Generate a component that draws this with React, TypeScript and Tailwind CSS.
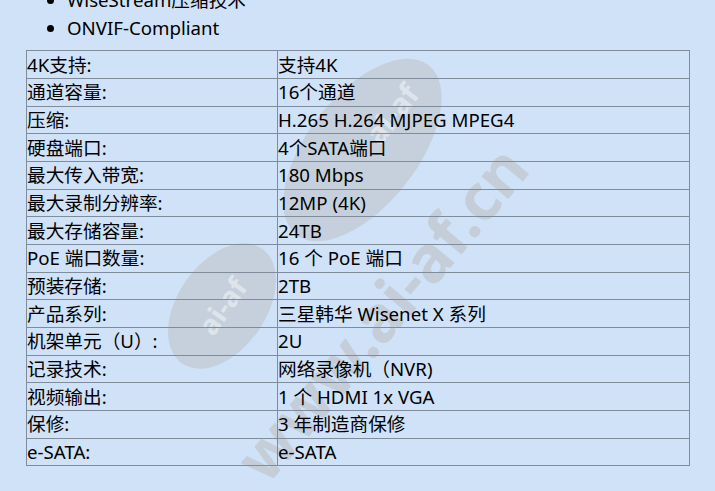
import React from "react";

const rows: [string, string][] = [
  ["4K支持:", "支持4K"],
  ["通道容量:", "16个通道"],
  ["压缩:", "H.265 H.264 MJPEG MPEG4"],
  ["硬盘端口:", "4个SATA端口"],
  ["最大传入带宽:", "180 Mbps"],
  ["最大录制分辨率:", "12MP (4K)"],
  ["最大存储容量:", "24TB"],
  ["PoE 端口数量:", "16 个 PoE 端口"],
  ["预装存储:", "2TB"],
  ["产品系列:", "三星韩华 Wisenet X 系列"],
  ["机架单元（U）:", "2U"],
  ["记录技术:", "网络录像机（NVR)"],
  ["视频输出:", "1 个 HDMI 1x VGA"],
  ["保修:", "3 年制造商保修"],
  ["e-SATA:", "e-SATA"],
];

export default function App() {
  return (
    <div
      className="relative h-[491px] w-[715px] overflow-hidden bg-[#cfe2f8] text-black"
      style={{ fontFamily: '"Noto Sans", "Noto Sans CJK SC", sans-serif' }}
    >
      {/* watermark (behind content) */}
      <div className="pointer-events-none absolute inset-0 z-0">
        <div className="absolute left-[152px] top-[262px] flex h-[88px] w-[140px] -rotate-[55deg] items-center justify-center rounded-[50%] bg-[#c0c4ca]/60">
          <span className="text-[28px] font-bold text-white/45" style={{ fontFamily: '"Noto Sans", sans-serif' }}>ai-af</span>
        </div>
        <div className="absolute left-[255px] top-[95px] flex h-[110px] w-[215px] -rotate-[52deg] items-center justify-end rounded-[50%] bg-[#c0c4ca]/60 pr-[28px]">
          <span className="text-[30px] font-bold text-white/45" style={{ fontFamily: '"Noto Sans", sans-serif' }}>ai-af</span>
        </div>
        <div
          className="absolute left-[175px] top-[265px] -rotate-[50deg] whitespace-nowrap text-[64px] font-bold text-[#c0c4ca]/70"
          style={{ fontFamily: '"Noto Sans", sans-serif' }}
        >
          www.ai-af.cn
        </div>
      </div>

      <div className="relative z-10">
        <ul className="mt-[-14px] list-disc pl-[67px] text-[18.67px] leading-[27.67px]">
          <li>WiseStream压缩技术</li>
          <li>ONVIF-Compliant</li>
        </ul>
        <table className="ml-[26px] mt-[9px] w-[664px] border-collapse text-[18.67px] leading-[25.67px]">
          <tbody>
            {rows.map(([k, v]) => (
              <tr key={k} className="h-[27.67px]">
                <td className="w-[251px] whitespace-nowrap border border-[#7f8c9b] p-0 align-middle">{k}</td>
                <td className="whitespace-nowrap border border-[#7f8c9b] p-0 align-middle">{v}</td>
              </tr>
            ))}
          </tbody>
        </table>
      </div>
    </div>
  );
}
